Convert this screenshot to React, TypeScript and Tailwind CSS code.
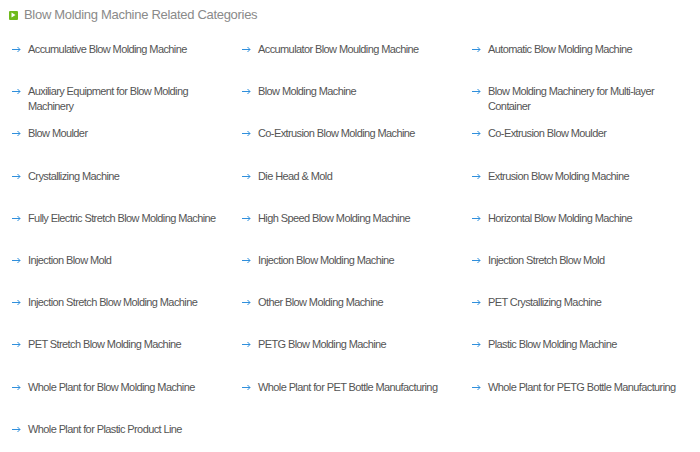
const categories: string[][] = [
  ['Accumulative Blow Molding Machine', 'Accumulator Blow Moulding Machine', 'Automatic Blow Molding Machine'],
  ['Auxiliary Equipment for Blow Molding Machinery', 'Blow Molding Machine', 'Blow Molding Machinery for Multi-layer Container'],
  ['Blow Moulder', 'Co-Extrusion Blow Molding Machine', 'Co-Extrusion Blow Moulder'],
  ['Crystallizing Machine', 'Die Head & Mold', 'Extrusion Blow Molding Machine'],
  ['Fully Electric Stretch Blow Molding Machine', 'High Speed Blow Molding Machine', 'Horizontal Blow Molding Machine'],
  ['Injection Blow Mold', 'Injection Blow Molding Machine', 'Injection Stretch Blow Mold'],
  ['Injection Stretch Blow Molding Machine', 'Other Blow Molding Machine', 'PET Crystallizing Machine'],
  ['PET Stretch Blow Molding Machine', 'PETG Blow Molding Machine', 'Plastic Blow Molding Machine'],
  ['Whole Plant for Blow Molding Machine', 'Whole Plant for PET Bottle Manufacturing', 'Whole Plant for PETG Bottle Manufacturing'],
  ['Whole Plant for Plastic Product Line'],
]

function TitleIcon() {
  return (
    <span className="flex h-[9px] w-[9px] items-center justify-center rounded-[1px] bg-[#6fba1c]">
      <svg width="5" height="6" viewBox="0 0 5 6">
        <path d="M0.5 0.5 L4.5 3 L0.5 5.5 Z" fill="#fff" />
      </svg>
    </span>
  )
}

function Arrow() {
  return (
    <svg width="9" height="7" viewBox="0 0 9 7" className="mt-[4px] shrink-0">
      <path d="M0 3.5 H8 M5.5 1 L8 3.5 L5.5 6" stroke="#2f8fdc" strokeWidth="1" fill="none" />
    </svg>
  )
}

function CategoryLink({ label }: { label: string }) {
  return (
    <a href="#" className="flex items-start gap-[7px] text-[11px] leading-[15px] tracking-[-0.6px] text-[#555]">
      <Arrow />
      <span className="w-[198px]">{label}</span>
    </a>
  )
}

export default function App() {
  return (
    <div className="h-[452px] w-[700px] bg-white font-['Liberation_Sans',sans-serif]">
      <div className="flex items-center gap-[6px] pl-[9px] pt-[7px]">
        <TitleIcon />
        <h2 className="text-[13px] leading-[16px] tracking-[-0.3px] text-[#8a8a8a]">Blow Molding Machine Related Categories</h2>
      </div>
      <div className="mt-[19px] pl-[12px]">
        {categories.map((row, i) => (
          <div key={i} className="grid h-[42.2px] grid-cols-[230px_230px_230px]">
            {row.map((label) => (
              <CategoryLink key={label} label={label} />
            ))}
          </div>
        ))}
      </div>
    </div>
  )
}
